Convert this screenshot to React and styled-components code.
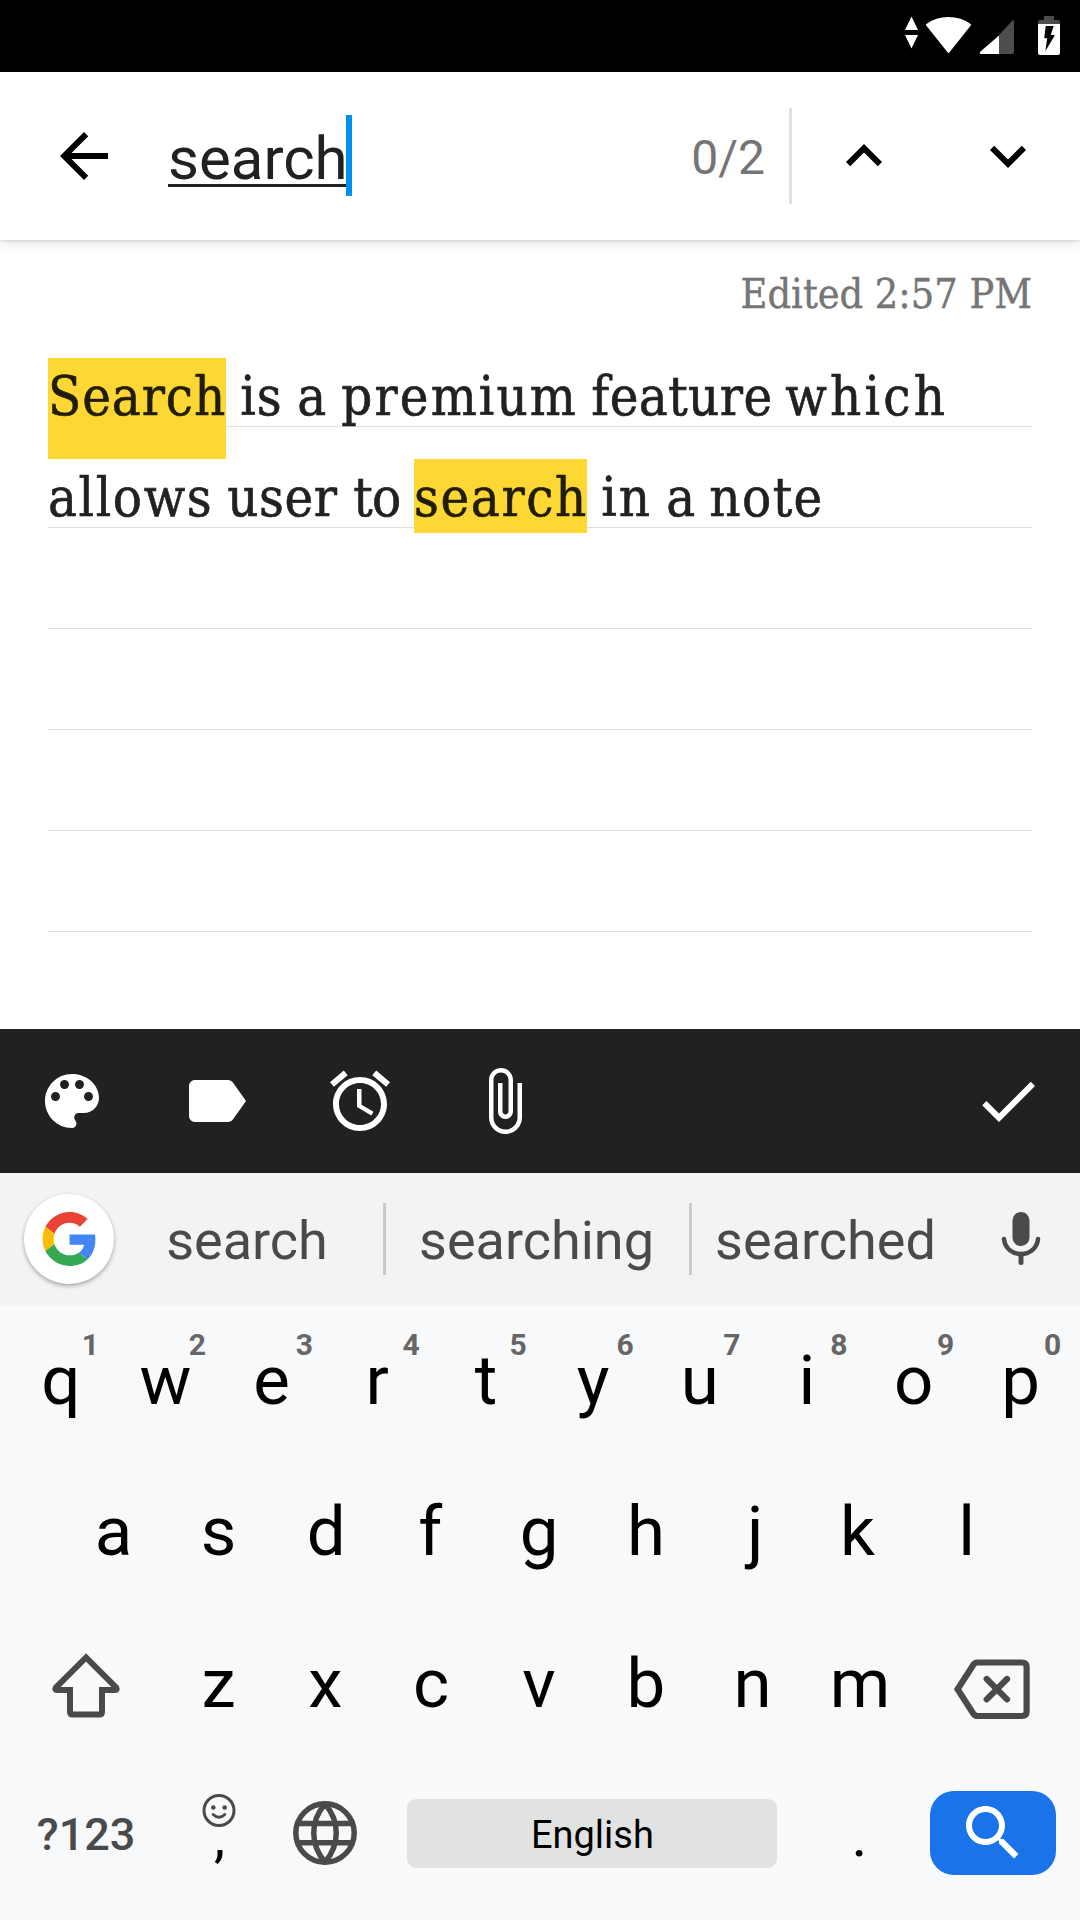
import React from "react";
import styled, { createGlobalStyle } from "styled-components";

const GlobalStyle = createGlobalStyle`
  * { box-sizing: border-box; }
  body { margin: 0; background: #fff; }
  svg { display: block; flex: none; }
`;

const Screen = styled.div`
  display: flex;
  flex-direction: column;
  width: 1080px;
  height: 1920px;
  overflow: hidden;
  background: #fff;
  font-family: Roboto, "Liberation Sans", sans-serif;
`;

/* ---------- status bar ---------- */
const StatusBar = styled.header`
  display: flex;
  justify-content: flex-end;
  align-items: flex-start;
  flex: none;
  height: 72px;
  padding: 14px 18px 0 0;
  background: #000;
`;

/* ---------- find bar ---------- */
const FindBar = styled.div`
  display: flex;
  align-items: center;
  flex: none;
  height: 168px;
  padding: 0 36px 0 48px;
  background: #fff;
  box-shadow: 0 1px 2px rgba(0, 0, 0, 0.12), 0 3px 12px rgba(0, 0, 0, 0.12);
  z-index: 1;
`;

const Query = styled.div`
  display: flex;
  align-items: center;
  flex: 1;
  padding-left: 48px;
`;

const QueryText = styled.span`
  height: 70px;
  margin-top: 6px;
  font-size: 60px;
  line-height: 70px;
  color: #212121;
  text-decoration: underline;
  text-decoration-thickness: 3px;
  text-underline-offset: 5px;
  text-decoration-skip-ink: none;
`;

const Caret = styled.i`
  width: 6px;
  height: 81px;
  margin: -1px 0 0 -2px;
  background: #0091ea;
`;

const Count = styled.span`
  padding: 3px 24px 0 0;
  font-size: 48px;
  line-height: 56px;
  color: #757575;
`;

const Separator = styled.i`
  width: 3px;
  height: ${(p) => p.$height}px;
  background: ${(p) => p.$color};
`;

const Steps = styled.div`
  display: flex;
  gap: 72px;
  padding-left: 36px;
`;

/* ---------- note ---------- */
const Note = styled.main`
  flex: none;
  height: 789px;
  padding: 0 48px;
`;

const Edited = styled.div`
  height: 118px;
  padding-top: 29px;
  font-family: "Roboto Slab", "DejaVu Serif Condensed", "DejaVu Serif", serif;
  font-stretch: condensed;
  font-size: 41px;
  line-height: 50px;
  text-align: right;
  color: #757575;
  -webkit-text-stroke: 0.4px #757575;
`;

const Ruled = styled.div`
  height: 671px;
  background: repeating-linear-gradient(
    to bottom,
    transparent 0 68px,
    #e0e0e0 68px 69px,
    transparent 69px 101px
  );
`;

const NoteLine = styled.div`
  display: flex;
  height: 101px;
  font-family: "Roboto Slab", "DejaVu Serif Condensed", "DejaVu Serif", serif;
  font-stretch: condensed;
  font-size: 54px;
  line-height: 78px;
  white-space: pre;
  color: #212121;
  -webkit-text-stroke: 0.6px currentColor;
`;

const Word = styled.span`
  width: ${(p) => p.$width}px;
  letter-spacing: ${(p) => p.$track}px;
  word-spacing: ${(p) => -1.1 - p.$track}px;
`;

const Mark = styled(Word)`
  height: ${(p) => p.$height}px;
  background: #fdd835;
  color: #211c07;
`;

/* ---------- note actions ---------- */
const ActionBar = styled.nav`
  display: flex;
  flex: none;
  height: 144px;
  background: linear-gradient(#212121 0 140px, #1b1b1b 144px);
`;

const Action = styled.button`
  display: grid;
  place-items: center;
  width: 144px;
  height: 144px;
  margin: 0 0 0 ${(p) => (p.$last ? "auto" : 0)};
  padding: 0;
  border: 0;
  background: none;
  color: #fff;
`;

/* ---------- keyboard ---------- */
const Suggestions = styled.div`
  display: flex;
  align-items: center;
  flex: none;
  height: 132px;
  padding-left: 24px;
  background: #f1f3f4;
`;

const GoogleButton = styled.div`
  display: grid;
  place-items: center;
  width: 90px;
  height: 90px;
  border-radius: 50%;
  background: #fff;
  box-shadow: 0 2px 4px rgba(0, 0, 0, 0.32);
`;

const Suggestion = styled.span`
  width: ${(p) => p.$width}px;
  padding: 4px ${(p) => p.$trim || 0}px 0 0;
  font-size: 54px;
  line-height: 64px;
  text-align: center;
  color: #4a4a4a;
`;

const MicSlot = styled.div`
  padding-left: 38px;
`;

const Keyboard = styled.section`
  flex: 1;
  padding: 0 6px 0 5px;
  background: #f8f9fb;
`;

const KeyRow = styled.div`
  display: flex;
  height: ${(p) => p.$height || 152}px;
  padding: 0 ${(p) => p.$right || 0}px 0 ${(p) => p.$left || 0}px;
`;

const Key = styled.div`
  position: relative;
  display: flex;
  align-items: center;
  justify-content: center;
  flex: ${(p) => p.$span || 1} 0 0;
  min-width: 0;
  padding-top: ${(p) => p.$drop || 0}px;
  font-size: 69px;
  line-height: 82px;
  color: #000;
`;

const Glyph = styled.span`
  margin-left: ${(p) => (p.$nudge || 0) * 2}px;
`;

const Hint = styled.sup`
  position: absolute;
  top: 22px;
  left: 50%;
  width: 64px;
  font-size: 30px;
  font-weight: 700;
  line-height: 36px;
  text-align: center;
  color: #666;
`;

const CommaKey = styled(Key)`
  flex-direction: column;
  justify-content: flex-start;
  padding-top: 32px;
`;

const Comma = styled.span`
  margin: -32px 0 0 2px;
  font-size: 56px;
`;

const Period = styled.span`
  padding-top: 5px;
  font-size: 60px;
`;

const Symbols = styled(Glyph)`
  font-size: 45px;
  font-weight: 500;
  color: #4a4a4a;
`;

const SpaceBar = styled.div`
  width: 370px;
  height: 69px;
  border-radius: 9px;
  background: #e1e3e2;
  font-size: 38px;
  line-height: 73px;
  text-align: center;
`;

const SearchKey = styled.div`
  display: grid;
  place-items: center;
  width: 126px;
  height: 84px;
  border-radius: 24px;
  background: #1a73e8;
  color: #fff;
`;

/* ---------- icons ---------- */
const paths = {
  back: "M20 11H7.83l5.59-5.59L12 4l-8 8 8 8 1.41-1.41L7.83 13H20v-2z",
  up: "M12 8l-6 6 1.41 1.41L12 10.83l4.59 4.58L18 14z",
  down: "M16.59 8.59L12 13.17 7.41 8.59 6 10l6 6 6-6z",
  palette:
    "M12 3c-4.97 0-9 4.03-9 9s4.03 9 9 9c.83 0 1.5-.67 1.5-1.5 0-.39-.15-.74-.39-1.01-.23-.26-.38-.61-.38-.99 0-.83.67-1.5 1.5-1.5H16c2.76 0 5-2.24 5-5 0-4.42-4.03-8-9-8zm-5.5 9c-.83 0-1.5-.67-1.5-1.5S5.67 9 6.5 9 8 9.67 8 10.5 7.33 12 6.5 12zm3-4C8.67 8 8 7.33 8 6.5S8.67 5 9.5 5s1.5.67 1.5 1.5S10.33 8 9.5 8zm5 0c-.83 0-1.5-.67-1.5-1.5S13.67 5 14.5 5s1.5.67 1.5 1.5S15.33 8 14.5 8zm3 4c-.83 0-1.5-.67-1.5-1.5S16.67 9 17.5 9s1.5.67 1.5 1.5-.67 1.5-1.5 1.5z",
  label:
    "M17.63 5.84C17.27 5.33 16.67 5 16 5L5 5.01C3.9 5.01 3 5.9 3 7v10c0 1.1.9 1.99 2 1.99L16 19c.67 0 1.27-.33 1.63-.84L22 12l-4.37-6.16z",
  alarm:
    "M22 5.72l-4.6-3.86-1.29 1.53 4.6 3.86L22 5.72zM7.88 3.39L6.6 1.86 2 5.71l1.29 1.53 4.59-3.85zM12.5 8H11v6l4.75 2.85.75-1.23-4-2.37V8zM12 4c-4.97 0-9 4.03-9 9s4.02 9 9 9c4.97 0 9-4.03 9-9s-4.03-9-9-9zm0 16c-3.87 0-7-3.13-7-7s3.13-7 7-7 7 3.13 7 7-3.13 7-7 7z",
  attach:
    "M16.5 6v11.5c0 2.21-1.79 4-4 4s-4-1.79-4-4V5c0-1.38 1.12-2.5 2.5-2.5s2.5 1.12 2.5 2.5v10.5c0 .55-.45 1-1 1s-1-.45-1-1V6H10v9.5c0 1.38 1.12 2.5 2.5 2.5s2.5-1.12 2.5-2.5V5c0-2.21-1.79-4-4-4S7 2.79 7 5v12.5c0 3.04 2.46 5.5 5.5 5.5s5.5-2.46 5.5-5.5V6h-1.5z",
  check: "M9 16.17L4.83 12l-1.42 1.41L9 19 21 7l-1.41-1.41z",
  search:
    "M15.5 14h-.79l-.28-.27C15.41 12.59 16 11.11 16 9.5 16 5.91 13.09 3 9.5 3S3 5.91 3 9.5 5.91 16 9.5 16c1.61 0 3.09-.59 4.23-1.57l.27.28v.79l5 4.99L20.49 19l-4.99-5zm-6 0C7.01 14 5 11.99 5 9.5S7.01 5 9.5 5 14 7.01 14 9.5 11.99 14 9.5 14z",
};

const Icon = ({ name }) => (
  <svg width="72" height="72" viewBox="0 0 24 24" fill="currentColor">
    <path d={paths[name]} />
  </svg>
);

const StatusIcons = () => (
  <svg width="162" height="44" viewBox="900 14 162 44">
    <path d="M911.5 16.5L918 30h-13zM905 35h13l-6.500 13.500z" fill="#fff" />
    <path
      d="M948.500 52L927 24.800Q936 18 948.500 18T970 24.800Z"
      fill="#fff"
      stroke="#fff"
      strokeWidth="2"
      strokeLinejoin="round"
    />
    <path d="M999 35L1012 21q2-2 2 1v30q0 2-2 2H999z" fill="#4d4d4d" />
    <path d="M999 35.500V54H981.500q-3 0-1-2.500z" fill="#fff" />
    <path d="M1044 16h10v4h4q2 0 2 2v2h-22v-2q0-2 2-2h4z" fill="#4d4d4d" />
    <path d="M1038 24h22v29q0 2-2 2h-18q-2 0-2-2z" fill="#fff" />
    <path d="M1045.700 26h8l-3 8.700 4.200.600-9.500 15.700 1.800-12.700h-3z" fill="#000" />
  </svg>
);

const GoogleLogo = () => (
  <svg width="54" height="54" viewBox="-.5 0 48 48">
    <path fill="#EA4335" d="M24 9.500c3.540 0 6.710 1.220 9.210 3.600l6.850-6.850C35.900 2.380 30.470 0 24 0 14.620 0 6.510 5.380 2.560 13.220l7.980 6.190C12.430 13.720 17.740 9.500 24 9.500z" />
    <path fill="#4285F4" d="M46.980 24.550c0-1.570-.15-3.090-.38-4.550H24v9.020h12.940c-.58 2.960-2.260 5.480-4.780 7.180l7.730 6c4.510-4.180 7.090-10.360 7.090-17.650z" />
    <path fill="#FBBC05" d="M10.530 28.590c-.48-1.450-.76-2.990-.76-4.590s.27-3.140.76-4.590l-7.980-6.190C.92 16.460 0 20.120 0 24c0 3.880.92 7.540 2.560 10.780l7.970-6.190z" />
    <path fill="#34A853" d="M24 48c6.480 0 11.930-2.130 15.890-5.810l-7.730-6c-2.150 1.450-4.920 2.300-8.160 2.300-6.260 0-11.570-4.220-13.470-9.910l-7.980 6.190C6.510 42.620 14.620 48 24 48z" />
  </svg>
);

const MicIcon = () => (
  <svg width="48" height="60" viewBox="0 0 48 60" fill="none" stroke="#4a4a4a" strokeLinecap="round">
    <rect x="15.500" y="3" width="17" height="34" rx="8.500" fill="#4a4a4a" stroke="none" />
    <path d="M7 30C9 50 39 50 41 30" strokeWidth="4.500" />
    <path d="M24 46v7.500" strokeWidth="5" />
  </svg>
);

const ShiftIcon = () => (
  <svg width="72" height="72" viewBox="0 0 72 72" fill="none" stroke="#4a4a4a" strokeWidth="6">
    <path d="M36 9.500L5.800 39.600Q4.500 42 7 42H20V64Q20 66.600 22.700 66.600H49.300Q52 66.600 52 64V42H65Q67.500 42 66.200 39.600Z" />
  </svg>
);

const BackspaceIcon = () => (
  <svg width="84" height="72" viewBox="0 0 84 72" fill="none" stroke="#4a4a4a" strokeWidth="6.200">
    <path d="M7.600 36.200L23.500 11.500Q25 9.500 27.500 9.500H72Q76.600 9.500 76.600 14V58.500Q76.600 63 72 63H27.500Q25 63 23.500 60.900Z" />
    <path d="M36.700 26L57 46.400M57 26L36.700 46.400" strokeLinecap="round" />
  </svg>
);

const EmojiIcon = () => (
  <svg width="36" height="36" viewBox="0 0 36 36" fill="none" stroke="#4a4a4a" strokeWidth="3">
    <circle cx="18" cy="18.500" r="15" />
    <circle cx="12.300" cy="15.500" r="2.300" fill="#4a4a4a" stroke="none" />
    <circle cx="23.700" cy="15.500" r="2.300" fill="#4a4a4a" stroke="none" />
    <path d="M12.200 22.500Q18 28 23.800 22.500" strokeLinecap="round" />
  </svg>
);

const GlobeIcon = () => (
  <svg width="64" height="64" viewBox="0 0 64 64" fill="none" stroke="#4a4a4a" strokeWidth="5.500">
    <circle cx="32" cy="32" r="29.200" />
    <path d="M32 3C17 20 17 44 32 61C47 44 47 20 32 3ZM4.500 22.500H59.500M4.500 41.800H59.500" />
  </svg>
);

/* ---------- data ---------- */
const lineOne = [
  { text: "Search", width: 178, track: 0.9, mark: 101 },
  { text: " is", width: 57, track: 1 },
  { text: " a", width: 44, track: 0.6 },
  { text: " premium", width: 250, track: 2.1 },
  { text: " feature", width: 194, track: 0.4 },
  { text: " which", width: 175, track: 3.2 },
];
const lineTwo = [
  { text: "allows", width: 165, track: 1.6 },
  { text: " user", width: 126, track: 0.5 },
  { text: " to ", width: 75, track: -0.8 },
  { text: "search", width: 173, track: 1.6, mark: 74 },
  { text: " in", width: 65, track: 1.8 },
  { text: " a", width: 43, track: 0.6 },
  { text: " note", width: 127, track: 1.4 },
];
const topKeys = ["q1", "w2", "e3", "r4", "t5", "y6", "u7", "i8", "o9", "p0"];

/* optical centring of letters with uneven side bearings */
const nudges = { q: 2.4, e: -0.8, r: -2, a: 1.6, d: 0.8, f: -2, j: 2.4, k: -2.2, c: -1.2, m: 0.6 };

const Line = ({ words }) => (
  <NoteLine>
    {words.map((w, i) =>
      w.mark ? (
        <Mark key={i} $width={w.width} $track={w.track} $height={w.mark}>{w.text}</Mark>
      ) : (
        <Word key={i} $width={w.width} $track={w.track}>{w.text}</Word>
      )
    )}
  </NoteLine>
);

const LetterKey = ({ letter, digit }) => (
  <Key>
    <Glyph $nudge={nudges[letter]}>{letter}</Glyph>
    {digit && <Hint>{digit}</Hint>}
  </Key>
);

export default function App() {
  return (
    <Screen>
      <GlobalStyle />
      <StatusBar><StatusIcons /></StatusBar>

      <FindBar>
        <Icon name="back" />
        <Query>
          <QueryText>search</QueryText>
          <Caret />
        </Query>
        <Count>0/2</Count>
        <Separator $height={96} $color="#e0e0e0" />
        <Steps>
          <Icon name="up" />
          <Icon name="down" />
        </Steps>
      </FindBar>

      <Note>
        <Edited>Edited 2:57 PM</Edited>
        <Ruled>
          <Line words={lineOne} />
          <Line words={lineTwo} />
        </Ruled>
      </Note>

      <ActionBar>
        {["palette", "label", "alarm", "attach"].map((n) => (
          <Action key={n}><Icon name={n} /></Action>
        ))}
        <Action $last><Icon name="check" /></Action>
      </ActionBar>

      <Suggestions>
        <GoogleButton><GoogleLogo /></GoogleButton>
        <Suggestion $width={269} $trim={3}>search</Suggestion>
        <Separator $height={72} $color="#c9cacc" />
        <Suggestion $width={303} $trim={2}>searching</Suggestion>
        <Separator $height={72} $color="#c9cacc" />
        <Suggestion $width={267}>searched</Suggestion>
        <MicSlot><MicIcon /></MicSlot>
      </Suggestions>

      <Keyboard>
        <KeyRow $height={151}>
          {topKeys.map(([letter, digit]) => (
            <LetterKey key={letter} letter={letter} digit={digit} />
          ))}
        </KeyRow>
        <KeyRow $left={53.4} $right={54}>
          {[..."asdfghjkl"].map((c) => <LetterKey key={c} letter={c} />)}
        </KeyRow>
        <KeyRow $right={1}>
          <Key $span={1.5}><Glyph $nudge={1}><ShiftIcon /></Glyph></Key>
          {[..."zxcvbnm"].map((c) => <LetterKey key={c} letter={c} />)}
          <Key $span={1.5} $drop={10}><Glyph $nudge={-1}><BackspaceIcon /></Glyph></Key>
        </KeyRow>
        <KeyRow $height={146} $right={1}>
          <Key $span={1.5} $drop={4}><Symbols $nudge={1}>?123</Symbols></Key>
          <CommaKey><EmojiIcon /><Comma>,</Comma></CommaKey>
          <Key><GlobeIcon /></Key>
          <Key $span={4}><SpaceBar>English</SpaceBar></Key>
          <Key><Period>.</Period></Key>
          <Key $span={1.5}><SearchKey><Icon name="search" /></SearchKey></Key>
        </KeyRow>
      </Keyboard>
    </Screen>
  );
}
